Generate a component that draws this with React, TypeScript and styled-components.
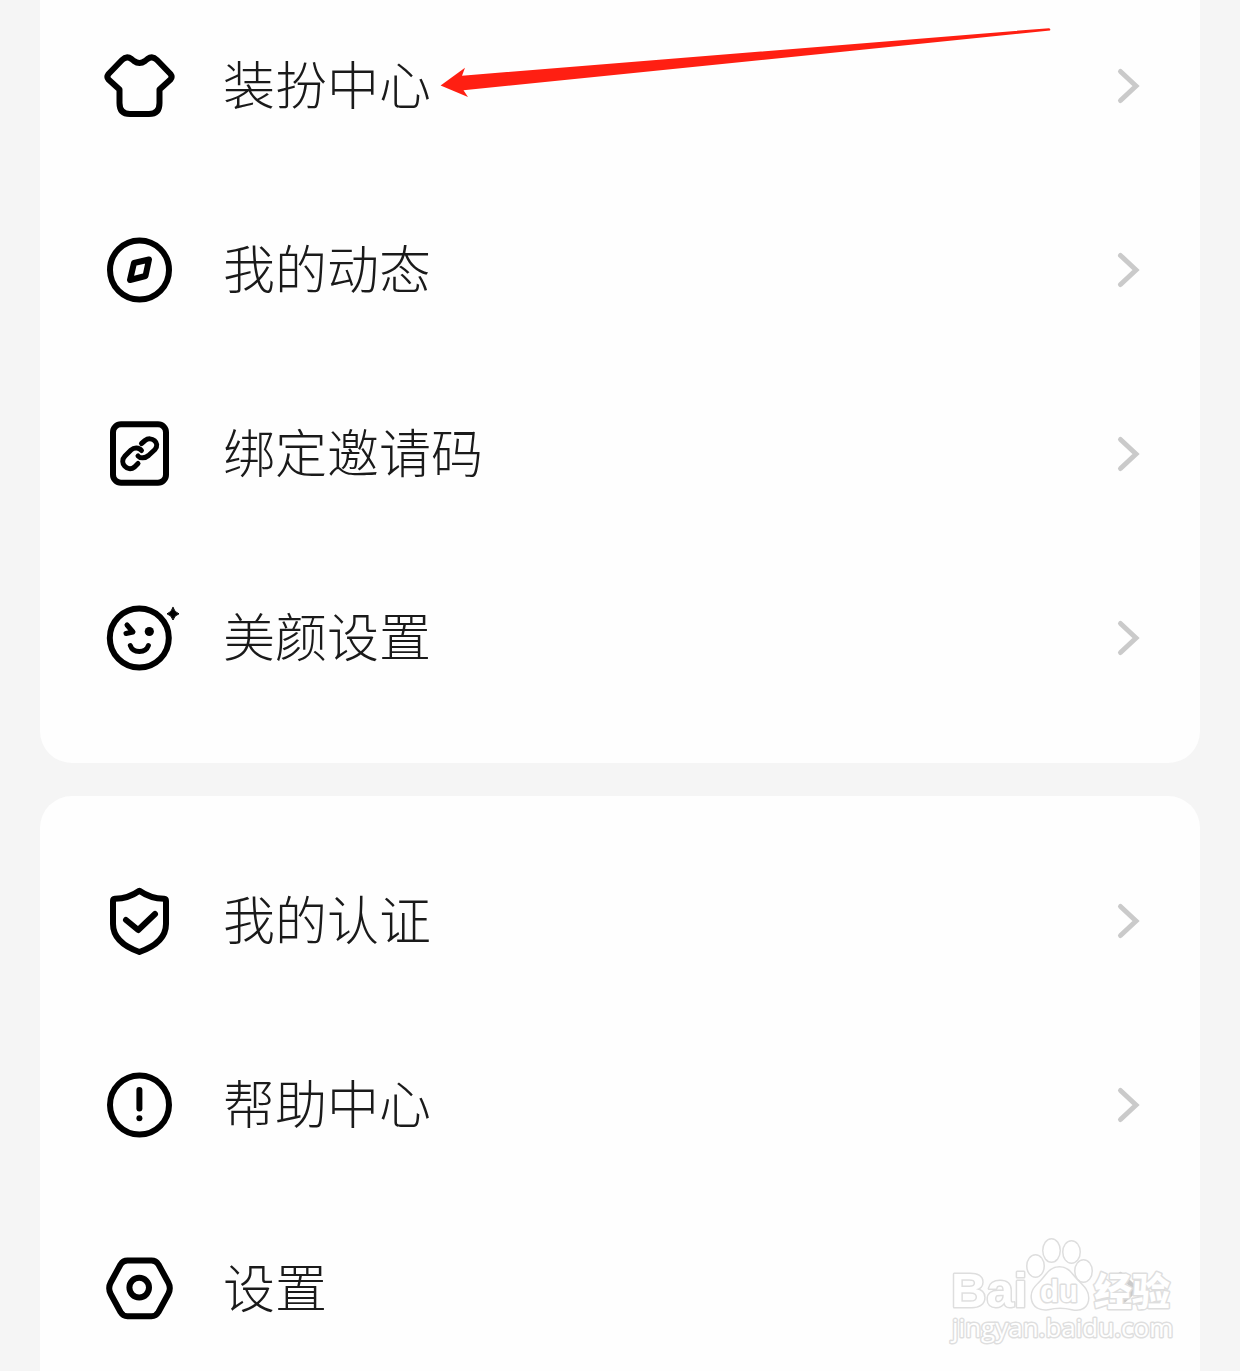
import React from 'react';
import styled, { createGlobalStyle } from 'styled-components';

const GlobalStyle = createGlobalStyle`
  *, *::before, *::after {
    box-sizing: border-box;
  }
  body {
    margin: 0;
    background: #f5f5f5;
    font-family: "Liberation Sans", "Noto Sans CJK SC", sans-serif;
  }
`;

const Page = styled.main`
  position: relative;
  display: flex;
  flex-direction: column;
  gap: 33px;
  min-height: 100vh;
  padding: 0 40px;
  overflow: hidden;
`;

const Card = styled.nav<{ $continues: 'above' | 'below' }>`
  display: flex;
  flex-direction: column;
  gap: 104px;
  background: #fefefe;
  padding: ${(p) => (p.$continues === 'above' ? '46px 60px 85px' : '85px 60px 42px')};
  border-radius: ${(p) => (p.$continues === 'above' ? '0 0 32px 32px' : '32px 32px 0 0')};
  flex-grow: ${(p) => (p.$continues === 'below' ? 1 : 0)};
`;

const Row = styled.a`
  display: flex;
  align-items: center;
  height: 80px;
  color: #1a1a1a;
  text-decoration: none;
`;

const Icon = styled.svg`
  flex: none;
  width: 80px;
  height: 80px;
  fill: none;
  stroke: #000;
  stroke-width: 6;
  stroke-linecap: round;
  stroke-linejoin: round;
`;

const Label = styled.span`
  flex: 1;
  margin-left: 43px;
  padding-bottom: 6px;
  font-family: "Noto Sans CJK SC", sans-serif;
  font-size: 52px;
  font-weight: 300;
  line-height: 74px;
  white-space: nowrap;
`;

const Chevron = styled.svg`
  flex: none;
  width: 24px;
  height: 40px;
  fill: none;
  stroke: #cacaca;
  stroke-width: 5;
  stroke-linecap: round;
`;

const Arrow = styled.svg`
  position: absolute;
  top: 24px;
  left: 440px;
  width: 612px;
  height: 76px;
  fill: #ff1f12;
  pointer-events: none;
`;

const Watermark = styled.svg`
  position: absolute;
  right: 64px;
  bottom: 23px;
  width: 228px;
  height: 112px;
  fill: #fff;
  stroke: #dedede;
  stroke-width: 3;
  stroke-linejoin: round;
  paint-order: stroke;
  pointer-events: none;
`;

const LogoText = styled.text<{ $size: number }>`
  font-family: "Liberation Sans", "Noto Sans CJK SC", sans-serif;
  font-size: ${(p) => p.$size}px;
  font-weight: 900;
`;

const SiteText = styled.text`
  font-family: "Open Sans", "Noto Sans", sans-serif;
  font-size: 26px;
  font-weight: 400;
`;

const icons = {
  shirt: (
    <path d="M19.5 43.5L8.500 33.500Q6.300 31 8.500 28L22 14Q26.500 9.500 31.500 13L34 15Q39.500 19 45 15L47.500 13Q52.500 9.500 57 14L70.500 28Q72.700 31 70.500 33.500L59.500 43.500V57Q59.500 68 49 68H30Q19.500 68 19.500 57Z" />
  ),
  compass: (
    <>
      <circle cx="39.5" cy="40" r="29.5" />
      <path d="M34 33L49 29.5L45.5 46L30 50Z" strokeWidth="6" />
    </>
  ),
  link: (
    <>
      <rect x="13" y="10.3" width="53" height="58.5" rx="8" />
      <g strokeWidth="5">
        <path d="M41.5 29.5L45 26.5C51.5 21.5 60.5 29 55 35.500L48.500 41.500C45 44.500 40 44.500 38 42" />
        <path d="M41.5 36.500C39 33.300 34 33.300 31 36L25 42C18.500 49 27.500 58.500 34.500 53L38 49.500" />
      </g>
    </>
  ),
  wink: (
    <>
      <circle cx="39.3" cy="40" r="29.5" />
      <path d="M27 27L33 34L26 35.5M30.3 47.5C33 55.5 45.7 55.5 48.4 47.5" strokeWidth="5" />
      <circle cx="49.3" cy="33.5" r="4.6" fill="#000" stroke="none" />
      <path
        d="M73 9.5Q74.4 14.4 79 15.8Q74.4 17.2 73 22Q71.6 17.2 67 15.8Q71.6 14.4 73 9.5Z"
        fill="#000"
        strokeWidth="1"
      />
    </>
  ),
  shield: (
    <>
      <path d="M39.4 9.700Q28.500 17.500 15 17.800Q13 18 13 20V43Q13 61.500 39.400 71Q66 61.500 66 43V20Q66 18 64 17.800Q50.500 17.500 39.400 9.700Z" />
      <path d="M26 39L38.2 49L55 33" />
    </>
  ),
  alert: (
    <>
      <circle cx="39.5" cy="40" r="29.5" />
      <path d="M39.4 25V43.5" />
      <circle cx="39.4" cy="53.3" r="3" fill="#000" stroke="none" />
    </>
  ),
  hexagon: (
    <>
      <path d="M27.5 11.5H51.5Q56 11.5 58.5 15.5L68.3 33.5Q71.3 39.3 68.3 45L58.5 63Q56 67.2 51.5 67.2H27.5Q23 67.2 20.5 63L10.7 45Q7.7 39.3 10.7 33.5L20.5 15.5Q23 11.5 27.5 11.5Z" />
      <circle cx="39.2" cy="38.6" r="9.8" />
    </>
  ),
};

type Item = { icon: keyof typeof icons; label: string };

const profileItems: Item[] = [
  { icon: 'shirt', label: '装扮中心' },
  { icon: 'compass', label: '我的动态' },
  { icon: 'link', label: '绑定邀请码' },
  { icon: 'wink', label: '美颜设置' },
];

const supportItems: Item[] = [
  { icon: 'shield', label: '我的认证' },
  { icon: 'alert', label: '帮助中心' },
  { icon: 'hexagon', label: '设置' },
];

const MenuRow = ({ icon, label }: Item) => (
  <Row href="#">
    <Icon viewBox="0 0 80 80" aria-hidden="true">
      {icons[icon]}
    </Icon>
    <Label>{label}</Label>
    <Chevron viewBox="0 0 24 40" aria-hidden="true">
      <path d="M4.500 5.500L20 20L4.500 34.500" />
    </Chevron>
  </Row>
);

export default function App() {
  return (
    <>
      <GlobalStyle />
      <Page>
        <Card $continues="above">
          {profileItems.map((item) => (
            <MenuRow key={item.label} {...item} />
          ))}
        </Card>
        <Card $continues="below">
          {supportItems.map((item) => (
            <MenuRow key={item.label} {...item} />
          ))}
        </Card>
        <Arrow viewBox="0 0 612 76" aria-hidden="true">
          <path d="M0.6 61.5L25 43.7L22 51.7L609 4.2Q611 5 610 6.6L23.5 66.3L28 73Z" />
        </Arrow>
        <Watermark viewBox="0 0 228 112">
          <ellipse cx="87.5" cy="30" rx="8" ry="10.5" />
          <ellipse cx="103.5" cy="14.5" rx="8" ry="11" />
          <ellipse cx="123.5" cy="16" rx="8" ry="10.5" />
          <ellipse cx="135.5" cy="35" rx="8" ry="10.5" />
          <path d="M111.5 31.5C103 31.5 100 37 95 43C90 49 83 53 84 62C85 71 92 74 100 73C108 71 116 71 124 73C133 75 140 71 140 62C140 53 133 49 127 42C122 36 119 31.5 111.5 31.5Z" />
          <LogoText $size={49} x="3" y="71">
            Bai
          </LogoText>
          <LogoText $size={31} x="92" y="66">
            du
          </LogoText>
          <LogoText $size={38} x="146" y="69">
            经验
          </LogoText>
          <SiteText x="4" y="101">
            jingyan.baidu.com
          </SiteText>
        </Watermark>
      </Page>
    </>
  );
}
